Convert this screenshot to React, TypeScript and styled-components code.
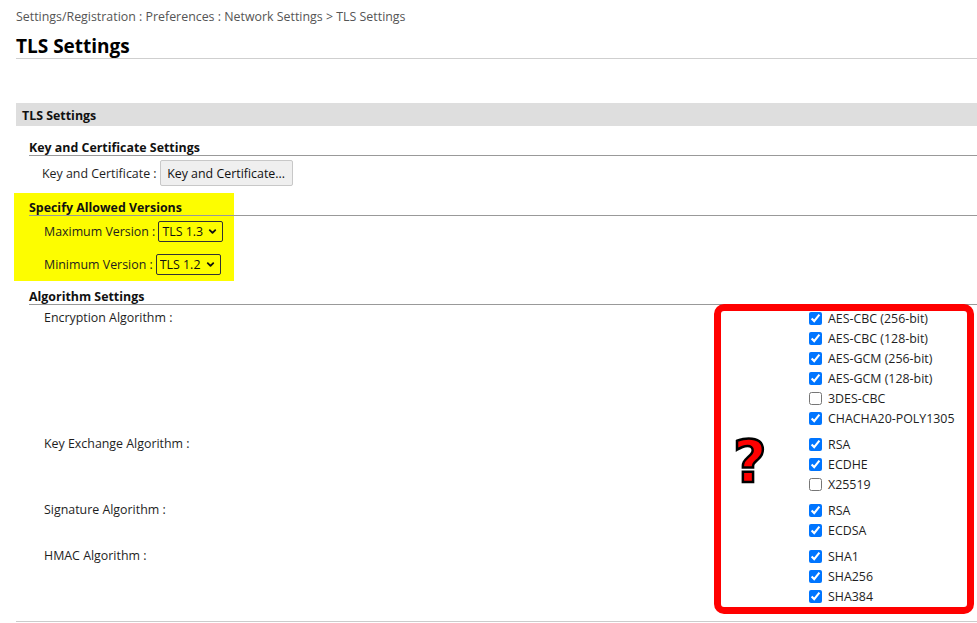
import React from 'react';
import { styled, createGlobalStyle } from 'styled-components';
import { ChevronDown } from 'lucide-react';

const GlobalStyle = createGlobalStyle`
  html, body {
    margin: 0;
    padding: 0;
    background: #fff;
  }
  body {
    font-family: 'Open Sans', 'Noto Sans', sans-serif;
    font-size: 12.4px;
    color: #1e1e1e;
  }
`;

type Algo = { name: string; checked: boolean };

const algorithmGroups: { label: string; items: Algo[] }[] = [
  {
    label: 'Encryption Algorithm :',
    items: [
      { name: 'AES-CBC (256-bit)', checked: true },
      { name: 'AES-CBC (128-bit)', checked: true },
      { name: 'AES-GCM (256-bit)', checked: true },
      { name: 'AES-GCM (128-bit)', checked: true },
      { name: '3DES-CBC', checked: false },
      { name: 'CHACHA20-POLY1305', checked: true },
    ],
  },
  {
    label: 'Key Exchange Algorithm :',
    items: [
      { name: 'RSA', checked: true },
      { name: 'ECDHE', checked: true },
      { name: 'X25519', checked: false },
    ],
  },
  {
    label: 'Signature Algorithm :',
    items: [
      { name: 'RSA', checked: true },
      { name: 'ECDSA', checked: true },
    ],
  },
  {
    label: 'HMAC Algorithm :',
    items: [
      { name: 'SHA1', checked: true },
      { name: 'SHA256', checked: true },
      { name: 'SHA384', checked: true },
    ],
  },
];

function VersionSelect({ value, options }: { value: string; options: string[] }) {
  return (
    <SelectBox>
      <Select defaultValue={value}>
        {options.map((o) => (
          <option key={o}>{o}</option>
        ))}
      </Select>
      <ChevronIcon size={11} strokeWidth={4} />
    </SelectBox>
  );
}

function App() {
  return (
    <Page>
      <GlobalStyle />
      <Breadcrumb>Settings/Registration : Preferences : Network Settings &gt; TLS Settings</Breadcrumb>
      <Title>TLS Settings</Title>

      <SectionBar>TLS Settings</SectionBar>

      <Group>
        <GroupTitle>Key and Certificate Settings</GroupTitle>
        <FieldRow $top={4}>
          <FieldLabel>Key and Certificate :</FieldLabel>
          <Button type="button">Key and Certificate...</Button>
        </FieldRow>
      </Group>

      <Group $highlight>
        <GroupTitle>Specify Allowed Versions</GroupTitle>
        <FieldRow $top={5} $indent={15}>
          <FieldLabel>Maximum Version :</FieldLabel>
          <VersionSelect value="TLS 1.3" options={['TLS 1.3', 'TLS 1.2']} />
        </FieldRow>
        <FieldRow $top={12} $indent={15}>
          <FieldLabel>Minimum Version :</FieldLabel>
          <VersionSelect value="TLS 1.2" options={['TLS 1.2', 'TLS 1.1']} />
        </FieldRow>
      </Group>

      <Group>
        <GroupTitle>Algorithm Settings</GroupTitle>
        <AlgoTable>
          {algorithmGroups.map((g) => (
            <AlgoRow key={g.label}>
              <AlgoLabel>{g.label}</AlgoLabel>
              <AlgoList>
                {g.items.map((it) => (
                  <CheckItem key={g.label + it.name}>
                    <input type="checkbox" defaultChecked={it.checked} />
                    <span>{it.name}</span>
                  </CheckItem>
                ))}
              </AlgoList>
            </AlgoRow>
          ))}
          <RedFrame />
          <QuestionMark>?</QuestionMark>
        </AlgoTable>
      </Group>

      <BottomRule />
    </Page>
  );
}

export default App;

const Page = styled.div`
  width: 961px;
  padding-left: 16px;
  overflow: hidden;
`;

const Breadcrumb = styled.div`
  height: 16px;
  line-height: 18px;
  padding-top: 8px;
  color: #555;
`;

const Title = styled.h1`
  margin: 0;
  padding-top: 10px;
  height: 24px;
  line-height: 24px;
  font-size: 19px;
  font-weight: 700;
  color: #000;
  border-bottom: 1px solid #cfcfcf;
`;

const SectionBar = styled.div`
  margin-top: 44px;
  height: 23px;
  line-height: 25px;
  padding-left: 6px;
  background: #dedede;
  font-weight: 700;
  color: #111;
`;

const Group = styled.div<{ $highlight?: boolean }>`
  position: relative;
  margin-left: 13px;
  padding-top: 13px;

  &::before {
    content: '';
    display: ${(p) => (p.$highlight ? 'block' : 'none')};
    position: absolute;
    left: -15px;
    top: 7px;
    width: 220px;
    height: 88px;
    background: #fdfd00;
    z-index: 0;
  }

  & > * {
    position: relative;
    z-index: 1;
  }
`;

const GroupTitle = styled.div`
  height: 16px;
  line-height: 17px;
  font-weight: 700;
  color: #111;
  border-bottom: 1px solid #999;
`;

const FieldRow = styled.div<{ $top: number; $indent?: number }>`
  display: flex;
  align-items: center;
  gap: 3px;
  margin-top: ${(p) => p.$top}px;
  padding-left: ${(p) => p.$indent ?? 13}px;
`;

const FieldLabel = styled.span`
  color: #1e1e1e;
`;

const Button = styled.button`
  height: 26px;
  width: 133px;
  padding: 0;
  font-family: inherit;
  font-size: 12.4px;
  color: #111;
  background: #efefef;
  border: 1px solid #c8c8c8;
  border-radius: 2px;
`;

const SelectBox = styled.span`
  position: relative;
  display: inline-flex;
  align-items: center;
  height: 19px;
  border: 1px solid #333;
  border-radius: 2px;
`;

const Select = styled.select`
  appearance: none;
  border: none;
  background: transparent;
  font-family: inherit;
  font-size: 12.4px;
  color: #111;
  height: 19px;
  padding: 0 19px 0 3px;
  outline: none;
`;

const ChevronIcon = styled(ChevronDown)`
  position: absolute;
  right: 4px;
  top: 4px;
  pointer-events: none;
  color: #111;
`;

const AlgoTable = styled.div`
  position: relative;
`;

const AlgoRow = styled.div`
  display: grid;
  grid-template-columns: 1fr 168px;
  padding: 3px 0;
`;

const AlgoLabel = styled.div`
  padding-left: 15px;
  line-height: 20px;
`;

const AlgoList = styled.div`
  display: flex;
  flex-direction: column;
`;

const CheckItem = styled.label`
  display: flex;
  align-items: center;
  gap: 6px;
  height: 20px;
  color: #1e1e1e;

  input {
    margin: 0;
    width: 13px;
    height: 13px;
    accent-color: #0075ff;
  }
`;

const RedFrame = styled.div`
  position: absolute;
  left: 685px;
  top: -1px;
  width: 246px;
  height: 296px;
  border: 7px solid #f00;
  border-radius: 10px;
  pointer-events: none;
`;

const QuestionMark = styled.div`
  position: absolute;
  left: 704px;
  top: 128px;
  font-family: 'DejaVu Sans', sans-serif;
  font-size: 58px;
  font-weight: 900;
  line-height: 58px;
  color: #f00;
  -webkit-text-stroke: 2.5px #000;
  pointer-events: none;
`;

const BottomRule = styled.div`
  margin-top: 12px;
  border-top: 1px solid #ccc;
`;
